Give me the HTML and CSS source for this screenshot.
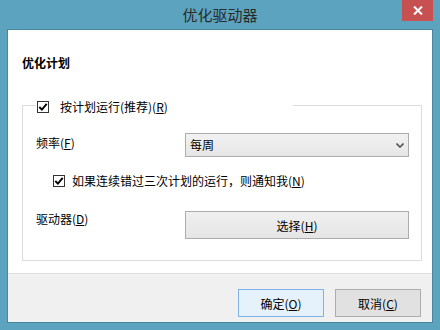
FILE: index.html
```html
<!DOCTYPE html>
<html lang="zh-CN">
<head>
    <meta charset="UTF-8">
    <title>优化驱动器</title>
    <link rel="stylesheet" href="styles.css">
</head>
<body>
    <div class="window">
        <!-- Title bar -->
        <div class="titlebar">
            <span class="title">优化驱动器</span>
            <button class="close" title="关闭">
                <svg width="10" height="9" viewBox="0 0 10 9">
                    <path d="M1 0.5 L9 8.5 M9 0.5 L1 8.5" stroke="#fff" stroke-width="2"/>
                </svg>
            </button>
        </div>

        <div class="client">
            <div class="content">
                <h1 class="heading">优化计划</h1>

                <fieldset class="group">
                    <legend class="group-title">
                        <label class="check">
                            <span class="box"><svg width="10" height="10" viewBox="0 0 10 10"><path d="M1.3 5 L3.9 7.6 L8.7 1.8" fill="none" stroke="#000" stroke-width="1.9"/></svg></span>
                            <span class="check-text">按计划运行(推荐)(<u>R</u>)</span>
                        </label>
                    </legend>

                    <div class="row">
                        <span class="label label-freq">频率(<u>F</u>)</span>
                        <div class="select">
                            <span>每周</span>
                            <svg width="8" height="5" viewBox="0 0 8 5"><path d="M0.5 0.5 L4 4 L7.5 0.5" fill="none" stroke="#555" stroke-width="1.6"/></svg>
                        </div>
                    </div>

                    <label class="check check-notify">
                        <span class="box"><svg width="10" height="10" viewBox="0 0 10 10"><path d="M1.3 5 L3.9 7.6 L8.7 1.8" fill="none" stroke="#000" stroke-width="1.9"/></svg></span>
                        <span class="check-text">如果连续错过三次计划的运行，则通知我(<u>N</u>)</span>
                    </label>

                    <div class="row row-drive">
                        <span class="label">驱动器(<u>D</u>)</span>
                        <button class="btn btn-wide">选择(<u>H</u>)</button>
                    </div>
                </fieldset>
            </div>

            <!-- Footer buttons -->
            <div class="footer">
                <button class="btn btn-default">确定(<u>O</u>)</button>
                <button class="btn">取消(<u>C</u>)</button>
            </div>
        </div>
    </div>
</body>
</html>
```

FILE: styles.css
```css
body {
    margin: 0;
    padding: 0;
    font-family: "Noto Sans CJK SC", "Microsoft YaHei", sans-serif;
    font-size: 12px;
    line-height: 16px;
    color: #000;
}

.window {
    width: 440px;
    height: 330px;
    box-sizing: border-box;
    padding: 0 7px 7px;
    background-color: #5ba3be;
    display: flex;
    flex-direction: column;
}

.titlebar {
    height: 29px;
    flex: none;
    display: grid;
    grid-template-columns: 1fr auto 1fr;
}

.title {
    grid-column: 2;
    align-self: center;
    font-size: 15px;
    line-height: 20px;
    color: #2a2a2a;
}

.close {
    grid-column: 3;
    justify-self: end;
    align-self: start;
    width: 31px;
    height: 21px;
    padding: 0;
    border: none;
    background-color: #c75050;
    display: flex;
    align-items: center;
    justify-content: center;
}

.client {
    flex: 1;
    display: flex;
    flex-direction: column;
    border: 1px solid #48879f;
    background-color: #fff;
}

.content {
    flex: 1;
    padding: 0 10px 0 14px;
}

.heading {
    margin: 25px 0 0;
    font-size: 12px;
    line-height: 16px;
    font-weight: bold;
}

.group {
    margin: 24px 0 0;
    min-width: 0;
    padding: 18px 11px 21px 13px;
    border: 1px solid #dcdcdc;
}

.group-title {
    width: 257px;
    box-sizing: border-box;
    padding: 4px 0 0 1px;
}

.check {
    display: flex;
    align-items: center;
    height: 16px;
}

.box {
    width: 12px;
    height: 12px;
    box-sizing: border-box;
    border: 1px solid #333;
    background-color: #fff;
    display: flex;
    align-items: center;
    justify-content: center;
    margin-right: 11px;
}

.row {
    display: grid;
    grid-template-columns: 149px 224px;
    align-items: start;
}

.label-freq {
    margin-top: 2px;
}

.select {
    height: 24px;
    box-sizing: border-box;
    border: 1px solid #acacac;
    background: linear-gradient(#f2f2f2, #e6e6e6);
    display: flex;
    align-items: center;
    justify-content: space-between;
    padding: 0 4px 0 4px;
}

.check-notify {
    margin: 16px 0 0 17px;
}

.check-notify .box {
    margin-right: 7px;
}

.row-drive {
    margin-top: 22px;
}

.btn {
    height: 28px;
    box-sizing: border-box;
    border: 1px solid #acacac;
    background: linear-gradient(#f0f0f0, #e5e5e5);
    font-family: inherit;
    font-size: 12px;
    color: #000;
    padding: 0;
}

.footer {
    height: 49px;
    flex: none;
    box-sizing: border-box;
    border-top: 1px solid #dfdfdf;
    background-color: #f0f0f0;
    display: flex;
    justify-content: flex-end;
    gap: 11px;
    padding: 15px 11px 0 0;
}

.footer .btn {
    width: 86px;
    background: #e1e1e1;
    border-color: #adadad;
}

.footer .btn-default {
    background: #e5f1fb;
    border-color: #7eb4ea;
}
```
